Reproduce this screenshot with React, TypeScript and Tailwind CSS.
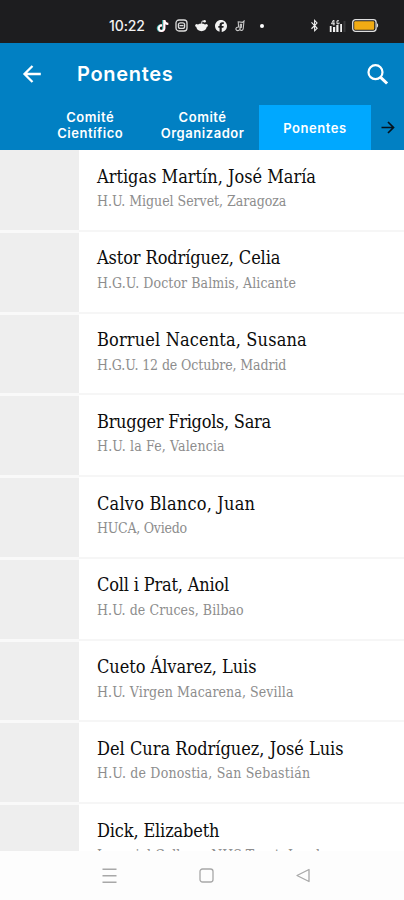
import { FaBluetoothB, FaFacebook, FaTiktok } from "react-icons/fa6";

const tabs = [
  { lines: ["Comité", "Científico"], style: "pb-[5px]" },
  { lines: ["Comité", "Organizador"], style: "pb-[5px]" },
  { lines: ["Ponentes"], style: "bg-[#00a8ff]" },
];

const speakers = [
  { name: "Artigas Martín, José María", place: "H.U. Miguel Servet, Zaragoza", nameFit: "tracking-[0px]", placeFit: "tracking-[-0.03px]" },
  { name: "Astor Rodríguez, Celia", place: "H.G.U. Doctor Balmis, Alicante", nameFit: "tracking-[-0.1px]", placeFit: "tracking-[0.07px]" },
  { name: "Borruel Nacenta, Susana", place: "H.G.U. 12 de Octubre, Madrid", nameFit: "tracking-[0.15px]", placeFit: "tracking-[-0.1px]" },
  { name: "Brugger Frigols, Sara", place: "H.U. la Fe, Valencia", nameFit: "tracking-[-0.26px]", placeFit: "tracking-[0.15px]" },
  { name: "Calvo Blanco, Juan", place: "HUCA, Oviedo", nameFit: "tracking-[0.2px]", placeFit: "tracking-[-0.26px]" },
  { name: "Coll i Prat, Aniol", place: "H.U. de Cruces, Bilbao", nameFit: "tracking-[-0.18px]", placeFit: "tracking-[0.08px]" },
  { name: "Cueto Álvarez, Luis", place: "H.U. Virgen Macarena, Sevilla", nameFit: "tracking-[-0.04px]", placeFit: "tracking-[0.1px]" },
  { name: "Del Cura Rodríguez, José Luis", place: "H.U. de Donostia, San Sebastián", nameFit: "tracking-[0px]", placeFit: "tracking-[0.19px]" },
  { name: "Dick, Elizabeth", place: "Imperial College, NHS Trust, London", nameFit: "tracking-[-0.15px]", placeFit: "tracking-[0px]" },
];

function StatusBar() {
  return (
    <div className="flex h-[43px] shrink-0 items-center bg-[#1d1d1f] pt-2 pl-[109px] text-[#f2f2f2]">
      <span className="w-[47px] text-[14px] leading-4 font-medium tracking-[-0.1px]">10:22</span>
      <div className="flex items-center gap-[7px]">
        <div className="grid size-[12px] place-items-center">
          <FaTiktok className="col-start-1 row-start-1 -ml-px size-[12px] text-[#35d6d0]" />
          <FaTiktok className="col-start-1 row-start-1 ml-px size-[12px] text-[#ef3d5b]" />
          <FaTiktok className="col-start-1 row-start-1 size-[12px] text-white" />
        </div>
        <svg className="size-[13px]" viewBox="0 0 13 13" fill="none" stroke="#dcdcdc" strokeWidth="1.3">
          <rect x="1" y="1" width="11" height="11" rx="3" />
          <rect x="3.4" y="3.8" width="6.2" height="5.6" rx="2" />
          <path d="M4.5 6.6h4" />
        </svg>
        <svg className="size-[13px]" viewBox="0 0 13 13" fill="currentColor">
          <ellipse cx="6.5" cy="8.3" rx="5" ry="3.9" />
          <circle cx="1.7" cy="6.5" r="1.5" />
          <circle cx="11.3" cy="6.5" r="1.5" />
          <circle cx="9.6" cy="2.2" r="1.3" />
          <path d="M6.5 4.7 7.2 2l2.4.4" fill="none" stroke="currentColor" strokeWidth="0.9" />
        </svg>
        <FaFacebook className="size-[12px]" />
        <svg className="size-[12px]" viewBox="0 0 12 12" fill="none" stroke="#c8c8c8" strokeWidth="1.1">
          <path d="M4.2 1.8 4.6 7C3 6.7 1.5 8 2 9.5c.5 1.5 3 1.4 3.8 0l.6-5.2h1.2L7.3 7.4c-1.3.2-1.6 1.5-1.1 2.3.8 1.3 2.6.8 3-.9L10 1 8.4 2.4 4.2 1.8Z" />
        </svg>
      </div>
      <span className="ml-[14px] size-[4px] rounded-full bg-white" />
      <FaBluetoothB className="ml-[45px] h-[13px] w-[11px]" />
      <svg className="ml-[8px] h-[14px] w-[18px]" viewBox="0 0 18 14" fill="currentColor">
        <path d="M1.8 7h1.8v6H1.8zM5 8h2.2v5H5zM8.3 6h2.2v7H8.3zM12.2 5h1.8v8h-1.8z" />
        <path d="M5.5 1 3.5 4.8h3.2M5.9 1v5.5M11 1.8H9v3h2V3.5" fill="none" stroke="currentColor" strokeWidth="1" />
        <path d="M15.5 2h2v11h-2z" fill="#39393b" />
      </svg>
      <svg className="ml-[6px] h-[13px] w-[27px]" viewBox="0 0 27 13">
        <rect x="0.7" y="0.7" width="23.4" height="11.6" rx="2.8" fill="none" stroke="#dedede" strokeWidth="1.3" />
        <rect x="2.2" y="2.2" width="20" height="8.6" rx="1" fill="#f0ab14" />
        <path d="M25 4.3c1.5.6 1.5 3.8 0 4.4" fill="#dedede" />
      </svg>
    </div>
  );
}

function Header() {
  return (
    <header className="flex h-[107px] shrink-0 flex-col bg-[#0180c3] text-white">
      <div className="flex h-[62px] items-center pl-[22px]">
        <svg className="h-[20px] w-[20px]" viewBox="0 0 20 20" fill="none" stroke="currentColor" strokeWidth="2.3">
          <path d="M18.8 10H3M10.5 2 2.5 10l8 8" />
        </svg>
        <h1 className="ml-[35px] flex-1 text-[20px] leading-6 font-semibold tracking-[0.7px]">Ponentes</h1>
        <svg className="mr-[15px] size-[23px]" viewBox="0 0 23 23" fill="none" stroke="currentColor">
          <circle cx="9.5" cy="9.2" r="7" strokeWidth="2.2" />
          <path d="m14.6 14.3 6.5 6.2" strokeWidth="3" />
        </svg>
      </div>
      <nav className="flex flex-1 pl-[34px]">
        {tabs.map((tab) => (
          <button
            key={tab.lines.join(" ")}
            className={`flex w-[112.4px] flex-col items-center justify-center text-[13px] leading-[16px] font-semibold tracking-[0.55px] ${tab.style}`}
          >
            {tab.lines.map((line) => (
              <span key={line}>{line}</span>
            ))}
          </button>
        ))}
        <div className="flex flex-1 items-center justify-center">
          <svg className="h-[13px] w-[14px]" viewBox="0 0 14 13" fill="none" stroke="#06121c" strokeWidth="1.7">
            <path d="M.5 6.5h11.8M7 1l5.5 5.5L7 12" />
          </svg>
        </div>
      </nav>
    </header>
  );
}

function SpeakerRow({ name, place, nameFit, placeFit }: (typeof speakers)[number]) {
  return (
    <li className="group flex h-[81.75px] shrink-0">
      <div className="w-[79px] border-b-[3px] border-[#f9f9f9] bg-[#eeeeee] group-first:-mt-px" />
      <div className="mb-px flex-1 border-b-2 border-[#f6f6f6] pt-[13.5px] pl-[18px] font-['DejaVu_Serif_Condensed','DejaVu_Serif',serif] whitespace-nowrap font-stretch-condensed">
        <p className={`text-[18px] leading-6 text-[#0c0c0c] ${nameFit}`}>{name}</p>
        <p className={`mt-[2.5px] text-[14px] leading-5 text-[#8d8d8d] ${placeFit}`}>{place}</p>
      </div>
    </li>
  );
}

function NavigationBar() {
  return (
    <div className="flex h-[49px] shrink-0 items-center gap-[82px] bg-[#fdfdfd] pl-[102px] text-[#a8a8a8]">
      <svg className="size-[15px]" viewBox="0 0 15 15" fill="none" stroke="currentColor" strokeWidth="1.4">
        <path d="M.5 1.2h14M.5 7.7h14M.5 14.2h14" />
      </svg>
      <svg className="size-[15px]" viewBox="0 0 15 15" fill="none" stroke="currentColor" strokeWidth="1.3">
        <rect x="1" y="1" width="13" height="13" rx="2.5" />
      </svg>
      <svg className="size-[15px]" viewBox="0 0 15 15" fill="none" stroke="currentColor" strokeWidth="1.3" strokeLinejoin="round">
        <path d="M13 1.5v12L1 7.5Z" />
      </svg>
    </div>
  );
}

export default function App() {
  return (
    <div className="flex h-[900px] w-[404px] flex-col overflow-hidden bg-white font-['Inter','Liberation_Sans',sans-serif]">
      <StatusBar />
      <Header />
      <ul className="flex min-h-0 flex-1 flex-col overflow-hidden bg-white pt-px">
        {speakers.map((speaker) => (
          <SpeakerRow key={speaker.name} {...speaker} />
        ))}
      </ul>
      <NavigationBar />
    </div>
  );
}
